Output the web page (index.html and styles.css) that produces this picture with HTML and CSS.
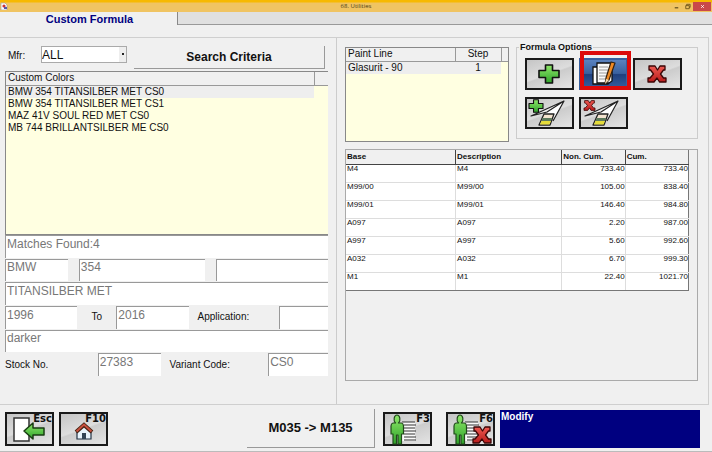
FILE: index.html
```html
<!DOCTYPE html>
<html lang="en">
<head>
<meta charset="utf-8">
<title>68. Utilities</title>
<link rel="stylesheet" href="styles.css">
</head>
<body>
<svg class="defs" aria-hidden="true">
  <defs>
    <linearGradient id="green" x1="0" y1="0" x2="0" y2="1"><stop offset="0" stop-color="#8fe86a"/><stop offset="1" stop-color="#2fa32a"/></linearGradient>
    <linearGradient id="red" x1="0" y1="0" x2="0" y2="1"><stop offset="0" stop-color="#ee5a52"/><stop offset="1" stop-color="#b81c1c"/></linearGradient>
    <symbol id="plus" viewBox="0 0 22 20"><path d="M7.500 1h7v5.500h6.500v7h-6.500V19h-7v-5.500H1v-7h6.500z" fill="url(#green)" stroke="#111" stroke-width="1.600" stroke-linejoin="round"/></symbol>
    <symbol id="cross" viewBox="0 0 20 18"><path d="M2 1h6l2.500 4L13 1h5v4h-1.500L13.500 9l3 4H19v4h-6.500L10 13l-3 4H1v-4h2l3.500-4-3-4H2z" fill="url(#red)" stroke="#3b0606" stroke-width="1.300" stroke-linejoin="round"/></symbol>
    <symbol id="spray" viewBox="0 0 49 32"><path d="M39 4 22 15l-4 5 11 2z" fill="#fff"/><path d="M39 4 6 19 22 15zM39 4 28 24" fill="#eee" stroke="#222" stroke-width="1.200" stroke-linejoin="round"/><path d="M19 17h10l-4 11H14z" fill="#f3e3cf" stroke="#222" stroke-width="1.300" stroke-linejoin="round"/><path d="M17.500 21H27l-1 3H16.500z" fill="#5d7a5d"/><path d="M16.500 24H26l-1.500 3.500h-9.500z" fill="#e5dc3a"/></symbol>
    <symbol id="person" viewBox="0 0 34 32"><path d="M13 9h13v19H13z" fill="#fafafa"/><path d="M13 9h13M15 12h12M15 15h11M15 18h12M15 21h11M15 24h12M15 27h12" stroke="#333" stroke-width="1.200"/><path d="M6.500 10C4 7.500 5 2 8 2s4 5.500 1.500 8h3q2 .5 2 3V21h-2v10H9v-9H7.500v9H4V21H2v-8q0-2.500 2-3z" fill="url(#green)" stroke="#214a1b" stroke-width="1.200" stroke-linejoin="round"/></symbol>
  </defs>
</svg>
<header class="titlebar">
  <svg class="app-icon" viewBox="0 0 8 8" aria-hidden="true"><path d="M1 1h4l2 2v5H1z" fill="#fff" stroke="#999" stroke-width=".6"/><circle cx="4" cy="4" r="1.600" fill="#c33"/><path d="M4 5h3v2H4z" fill="#55a"/></svg>
  <h1>68. Utilities</h1>
  <div class="window-controls">
    <button aria-label="Minimize"><svg viewBox="0 0 8 8"><path d="M2 5.500h4" stroke="#493a14" stroke-width="1.200"/></svg></button>
    <button aria-label="Restore"><svg viewBox="0 0 8 8"><path d="M2 3h4v3.500H2zM3 3V1.500h4V5H6" fill="none" stroke="#6b5318"/></svg></button>
    <button class="close" aria-label="Close"><svg viewBox="0 0 8 8"><path d="m2.500 2.500 3 3m0-3-3 3" stroke="#fff"/></svg></button>
  </div>
</header>
<nav class="tabs"><button class="tab">Custom Formula</button></nav>
<main class="workspace">
  <section class="search">
    <div class="filter">
      <label for="mfr">Mfr:</label>
      <span class="select-wrap"><select id="mfr"><option>ALL</option></select></span>
      <button class="raised">Search Criteria</button>
    </div>
    <div class="list colors">
      <table>
        <thead><tr><th>Custom Colors</th><th class="spare"></th></tr></thead>
        <tbody>
          <tr class="current"><td>BMW 354 TITANSILBER MET CS0</td><td></td></tr>
          <tr><td>BMW 354 TITANSILBER MET CS1</td><td></td></tr>
          <tr><td>MAZ 41V SOUL RED MET CS0</td><td></td></tr>
          <tr><td>MB 744 BRILLANTSILBER ME CS0</td><td></td></tr>
        </tbody>
      </table>
    </div>
    <form class="details">
      <div class="row"><input aria-label="Matches" value="Matches Found:4" readonly></div>
      <div class="row codes"><input aria-label="Manufacturer" value="BMW"><input aria-label="Color code" value="354"><input aria-label="Secondary code"></div>
      <div class="row"><input aria-label="Color name" value="TITANSILBER MET"></div>
      <div class="row years"><input id="from" aria-label="From year" value="1996"><label for="to">To</label><input id="to" value="2016"><label for="app">Application:</label><input id="app"></div>
      <div class="row"><input aria-label="Comment" value="darker"></div>
      <div class="row stock"><label for="stock">Stock No.</label><input id="stock" value="27383"><label for="variant">Variant Code:</label><input id="variant" value="CS0"></div>
    </form>
  </section>
  <section class="formula">
    <div class="top">
      <div class="list lines">
        <table>
          <thead><tr><th>Paint Line</th><th class="step">Step</th><th class="edge"></th></tr></thead>
          <tbody><tr class="current"><td>Glasurit - 90</td><td class="step">1</td><td></td></tr></tbody>
        </table>
      </div>
      <fieldset class="options">
        <legend>Formula Options</legend>
        <div class="buttons">
          <button class="tool" aria-label="Add"><svg viewBox="0 0 49 32"><use href="#plus" x="13" y="6" width="22" height="20"/></svg></button>
          <button class="tool active" aria-label="Modify"><svg viewBox="0 0 49 32"><path d="M14 9h15v17H14z" fill="#fff" stroke="#111" stroke-width="1.300"/><path d="M18 5h15v18l-3 2H18z" fill="#fafafa" stroke="#111" stroke-width="1.300"/><path d="M20 9h9M20 12h9M20 15h9M20 18h7M20 21h7" stroke="#999"/><path d="m32 4 4 1-6 17-4 4 1-6z" fill="#f08a24" stroke="#321" stroke-width="1.200" stroke-linejoin="round"/><path d="m27 21 3 1-4 4z" fill="#f2dab0"/></svg></button>
          <button class="tool" aria-label="Delete"><svg viewBox="0 0 49 32"><use href="#cross" x="14" y="7" width="20" height="18"/></svg></button>
          <button class="tool" aria-label="Add spray"><svg viewBox="0 0 49 32"><use href="#spray" width="49" height="32"/><use href="#plus" x="3" y="2" width="16" height="14"/></svg></button>
          <button class="tool" aria-label="Remove spray"><svg viewBox="0 0 49 32"><use href="#spray" width="49" height="32"/><use href="#cross" x="4" y="3" width="13" height="11"/></svg></button>
        </div>
      </fieldset>
    </div>
    <div class="grid-panel">
      <table class="bases">
        <thead><tr><th>Base</th><th>Description</th><th>Non. Cum.</th><th>Cum.</th></tr></thead>
        <tbody>
          <tr><td>M4</td><td>M4</td><td>733.40</td><td>733.40</td></tr>
          <tr><td>M99/00</td><td>M99/00</td><td>105.00</td><td>838.40</td></tr>
          <tr><td>M99/01</td><td>M99/01</td><td>146.40</td><td>984.80</td></tr>
          <tr><td>A097</td><td>A097</td><td>2.20</td><td>987.00</td></tr>
          <tr><td>A997</td><td>A997</td><td>5.60</td><td>992.60</td></tr>
          <tr><td>A032</td><td>A032</td><td>6.70</td><td>999.30</td></tr>
          <tr><td>M1</td><td>M1</td><td>22.40</td><td>1021.70</td></tr>
        </tbody>
      </table>
    </div>
  </section>
</main>
<footer class="actions">
  <button class="tool key"><svg viewBox="0 0 49 34" aria-hidden="true"><path d="M9 6h15v23H9z" fill="#fff" stroke="#333" stroke-width="1.500"/><path d="m19 19 9-8v5h11v7H28v4z" fill="url(#green)" stroke="#183c12" stroke-width="1.500" stroke-linejoin="round"/></svg><span>Esc</span></button>
  <button class="tool key"><svg viewBox="0 0 49 34" aria-hidden="true"><path d="M18 19v8h14v-8l-7-6z" fill="#e9f3fb" stroke="#234" stroke-width="1.200"/><path d="m17 20 8-7 8 7" fill="none" stroke="#421" stroke-width="4"/><path d="m17.500 19.500 7.500-7 7.500 7" fill="none" stroke="#c8513f" stroke-width="2"/><path d="M23 21h4v6h-4z" fill="#345"/></svg><span>F10</span></button>
  <button class="raised convert">M035 -&gt; M135</button>
  <button class="tool key"><svg viewBox="0 0 49 34" aria-hidden="true"><use href="#person" x="6" y="1" width="34" height="32"/></svg><span>F3</span></button>
  <button class="tool key"><svg viewBox="0 0 49 34" aria-hidden="true"><use href="#person" x="6" y="1" width="34" height="32"/><use href="#cross" x="26" y="14" width="20" height="18"/></svg><span>F6</span></button>
  <output class="status">Modify</output>
</footer>
</body>
</html>
```
FILE: styles.css
```css
* { box-sizing: border-box; }
body {
  margin: 0;
  min-height: 100vh;
  display: flex;
  flex-direction: column;
  background: #f0f0f0;
  color: #111;
  font: 10px/12px "Liberation Sans", Arial, sans-serif;
  border-bottom: 1px solid #bbb;
}
button, input, select { font: inherit; color: inherit; margin: 0; padding: 0; border: 0; border-radius: 0; min-width: 0; }
table { border-collapse: collapse; table-layout: fixed; width: 100%; }
th, td { padding: 0 2px; text-align: left; font-weight: normal; white-space: nowrap; }
.defs { position: absolute; width: 0; height: 0; }

.titlebar {
  height: 12px;
  display: grid;
  grid-template-columns: 1fr auto 1fr;
  align-items: center;
  background: linear-gradient(#f7b900 0 2px, #f0c462 3px);
}
.titlebar h1 { margin: 0; font: 6px/12px "Open Sans", sans-serif; color: #493a14; }
.app-icon { width: 8px; height: 8px; }
.window-controls { display: flex; justify-content: flex-end; gap: 1px; padding-right: 1px; }
.window-controls button { display: flex; align-items: center; justify-content: center; width: 10px; height: 9px; background: none; }
.window-controls svg { width: 7px; height: 7px; }
.window-controls .close { width: 18px; background: #c9494a; }

.tabs { height: 13px; background: #e0e0e0; border-bottom: 1px solid #999; display: flex; }
.tab {
  flex: 0 0 25%;
  height: 13px;
  padding: 1px 0 0 2px;
  background: #f0f0f0;
  border-right: 1px solid #888;
  color: #000080;
  font-size: 11px;
  font-weight: bold;
  line-height: 12px;
}

.workspace {
  flex: 1;
  display: grid;
  grid-template-columns: minmax(0, 337fr) minmax(0, 371fr);
  margin: 12px 3px 0 0;
  border: solid #cfcfcf;
  border-width: 1px 1px 1px 0;
}
.search { padding: 8px 8px 0 5px; border-right: 1px solid #ccc; }
.formula { padding: 9px 10px 23px 8px; display: flex; flex-direction: column; }

.filter { display: flex; height: 24px; margin-bottom: 1px; padding: 0 3px; }
.filter label { width: 33px; line-height: 20px; }
.select-wrap { position: relative; width: 86px; height: 17px; margin-right: 7px; }
.select-wrap::after { content: ""; position: absolute; right: 3px; top: 7px; width: 2px; height: 2px; background: #222; }
select {
  appearance: none;
  width: 100%;
  height: 17px;
  background: linear-gradient(to left, #eee 7px, #fff 7px);
  border: 1px solid #aaa;
  font-size: 12px;
}
.raised {
  flex: 1;
  background: #f0f0f0;
  border: solid #999;
  border-width: 0 1px 1px 0;
  font-size: 12px;
  font-weight: bold;
}
.filter .raised { height: 23px; }

.list { background: #ffffe1; border: 1px solid #888; }
.list th { height: 13px; padding: 0 2px; background: #f0f0f0; border: solid #999; border-width: 0 1px 1px 0; }
.list th:last-child { border-right: 0; }
.list td { height: 12px; padding: 0 2px; }
.current td:not(:last-child) { background: #eee; }
.colors { height: 164px; border-right: 0; }
.spare { width: 14px; }

.details { display: grid; grid-template-rows: repeat(6, 1fr); height: 142px; color: #777; font-size: 12px; }
.row { display: grid; padding-bottom: 1px; }
.row input { width: 100%; height: 100%; padding: 0 1px 6px; background: #fff; border: solid #999; border-width: 1px 0 0 1px; }
.row label { color: #111; font-size: 10px; align-self: center; padding-left: 9px; }
.codes { grid-template-columns: 63fr 127fr 112fr; gap: 11px; }
.years { grid-template-columns: 72fr 39fr 72fr 90fr 49fr; }
.years label[for="to"] { text-align: center; padding: 0; }
.stock { grid-template-columns: 93fr 63fr 108fr 60fr; }
.stock label:first-child { padding: 0; }

.top { display: grid; grid-template-columns: minmax(0, 164fr) minmax(0, 182fr); gap: 7px; height: 102px; }
.lines { height: 95px; }
.lines .step { width: 46px; text-align: center; }
.edge { width: 7px; }
.options {
  min-width: 0;
  height: 98px;
  margin: -6px 0 0;
  padding: 0 8px;
  border: 1px solid #ccc;
}
.options legend { margin-left: -6px; padding: 0 1px; font-size: 9px; font-weight: bold; }
.buttons { display: grid; grid-template-columns: repeat(3, 49px); gap: 7px 5px; padding-top: 5px; }
.tool {
  position: relative;
  width: 49px;
  height: 32px;
  background: linear-gradient(160deg, #c5c5c5, #ddd 48%, #ccc 52%, #e4e4e4);
  border: 2px solid #1a1a1a;
}
.tool svg { position: absolute; top: -2px; left: -2px; width: 49px; height: calc(100% + 4px); }
.active { background: linear-gradient(#5a82bf, #39619f 48%, #1e407e 52%, #365f9f); border-color: #365f9f; }
.active::after { content: ""; position: absolute; inset: -9px -5px -2px -1px; border: 4px solid #dd0a0a; }

.grid-panel { flex: 1; border: 1px solid #aaa; padding-right: 8px; }
.bases { background: #fff; border: solid #777; border-width: 0 1px 1px 0; font-size: 8px; line-height: 8px; }
.bases th { height: 14px; background: #f0f0f0; border: solid #444; border-width: 0 1px 1px 0; padding: 0 1px; font-weight: bold; }
.bases td { height: 18px; padding: 0 1px; vertical-align: top; border: solid #ddd; border-width: 0 1px 1px 0; }
.bases tr > :last-child { border-right-color: #777; }
.bases tr:last-child td { border-bottom-color: #777; }
.bases th:nth-child(1) { width: 32%; }
.bases th:nth-child(2) { width: 31%; }
.bases td:nth-child(n+3) { text-align: right; padding-right: 0; }

.actions { display: flex; align-items: center; gap: 5px; height: 46px; padding: 1px 12px 0 5px; }
.key { height: 34px; flex: none; }
.key span { position: absolute; top: -1px; right: 0; font: bold 10px/12px "DejaVu Sans", sans-serif; color: #111; }
.convert { flex: 0 0 128px; height: 39px; margin: 0 3px 0 auto; font-size: 13px; }
.actions .key:nth-last-child(2) { margin-left: 9px; }
.status { flex: 0 0 200px; height: 38px; background: #000080; color: #fff; font-weight: bold; padding: 1px; }
```
